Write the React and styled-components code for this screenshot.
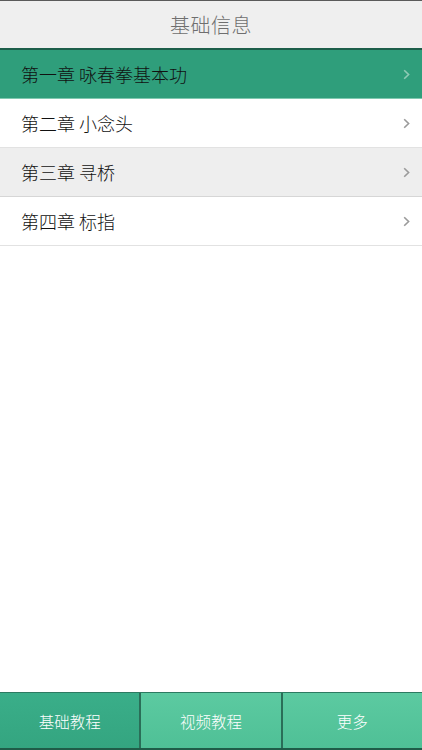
import React from "react";
import styled, { createGlobalStyle } from "styled-components";

const GlobalStyle = createGlobalStyle`
  html, body {
    margin: 0;
    padding: 0;
    height: 100%;
  }
  body {
    font-family: "Noto Sans CJK SC", "Noto Sans", sans-serif;
    background: #ffffff;
  }
  #root {
    height: 100%;
  }
`;

const Screen = styled.div`
  display: flex;
  flex-direction: column;
  height: 750px;
  width: 422px;
  overflow: hidden;
  background: #ffffff;
`;

const Header = styled.header`
  height: 47px;
  border-top: 1px solid #5a5a5a;
  border-bottom: 2px solid #1d5e4a;
  background: #efefef;
  display: flex;
  align-items: center;
  justify-content: center;
  font-size: 20px;
  font-weight: 300;
  color: #6e6e6e;
  letter-spacing: 0.5px;
`;

const List = styled.ul`
  list-style: none;
  margin: 0;
  padding: 0;
  flex: 1;
`;

const Row = styled.li`
  height: 48px;
  display: flex;
  align-items: center;
  justify-content: space-between;
  padding: 0 12px 0 21px;
  font-size: 18px;
  font-weight: 300;
  color: #111111;
  background: ${(p) => (p.active ? "#2f9e7b" : p.shaded ? "#eeeeee" : "#ffffff")};
  border-bottom: 1px solid ${(p) => (p.active ? "#7fc9b0" : p.shaded ? "#d6d6d6" : "#e2e2e2")};
`;

const Chevron = styled.svg`
  width: 7px;
  height: 11px;
  flex-shrink: 0;
`;

const TabBar = styled.nav`
  height: 55px;
  display: flex;
  border-top: 1px solid #2c7a61;
  border-bottom: 2px solid #1f5c48;
`;

const Tab = styled.div`
  flex: 1;
  display: flex;
  align-items: center;
  justify-content: center;
  font-size: 15.5px;
  font-weight: 300;
  color: #ffffff;
  background: ${(p) =>
    p.active
      ? "linear-gradient(#3aae89, #34a580)"
      : "linear-gradient(#5ccaa1, #4fc096)"};
  & + & {
    border-left: 2px solid #2a6e58;
  }
`;

const chapters = [
  "第一章 咏春拳基本功",
  "第二章 小念头",
  "第三章 寻桥",
  "第四章 标指",
];

const tabs = ["基础教程", "视频教程", "更多"];

export default function App() {
  return (
    <>
      <GlobalStyle />
      <Screen>
        <Header>基础信息</Header>
        <List>
          {chapters.map((c, i) => (
            <Row key={c} active={i === 0} shaded={i === 2}>
              <span>{c}</span>
              <Chevron viewBox="0 0 7 11">
                <path
                  d="M1.2 1.2 L5.6 5.5 L1.2 9.8"
                  fill="none"
                  stroke={i === 0 ? "#8fcab5" : "#9a9a9a"}
                  strokeWidth="1.6"
                />
              </Chevron>
            </Row>
          ))}
        </List>
        <TabBar>
          {tabs.map((t, i) => (
            <Tab key={t} active={i === 0}>
              {t}
            </Tab>
          ))}
        </TabBar>
      </Screen>
    </>
  );
}
